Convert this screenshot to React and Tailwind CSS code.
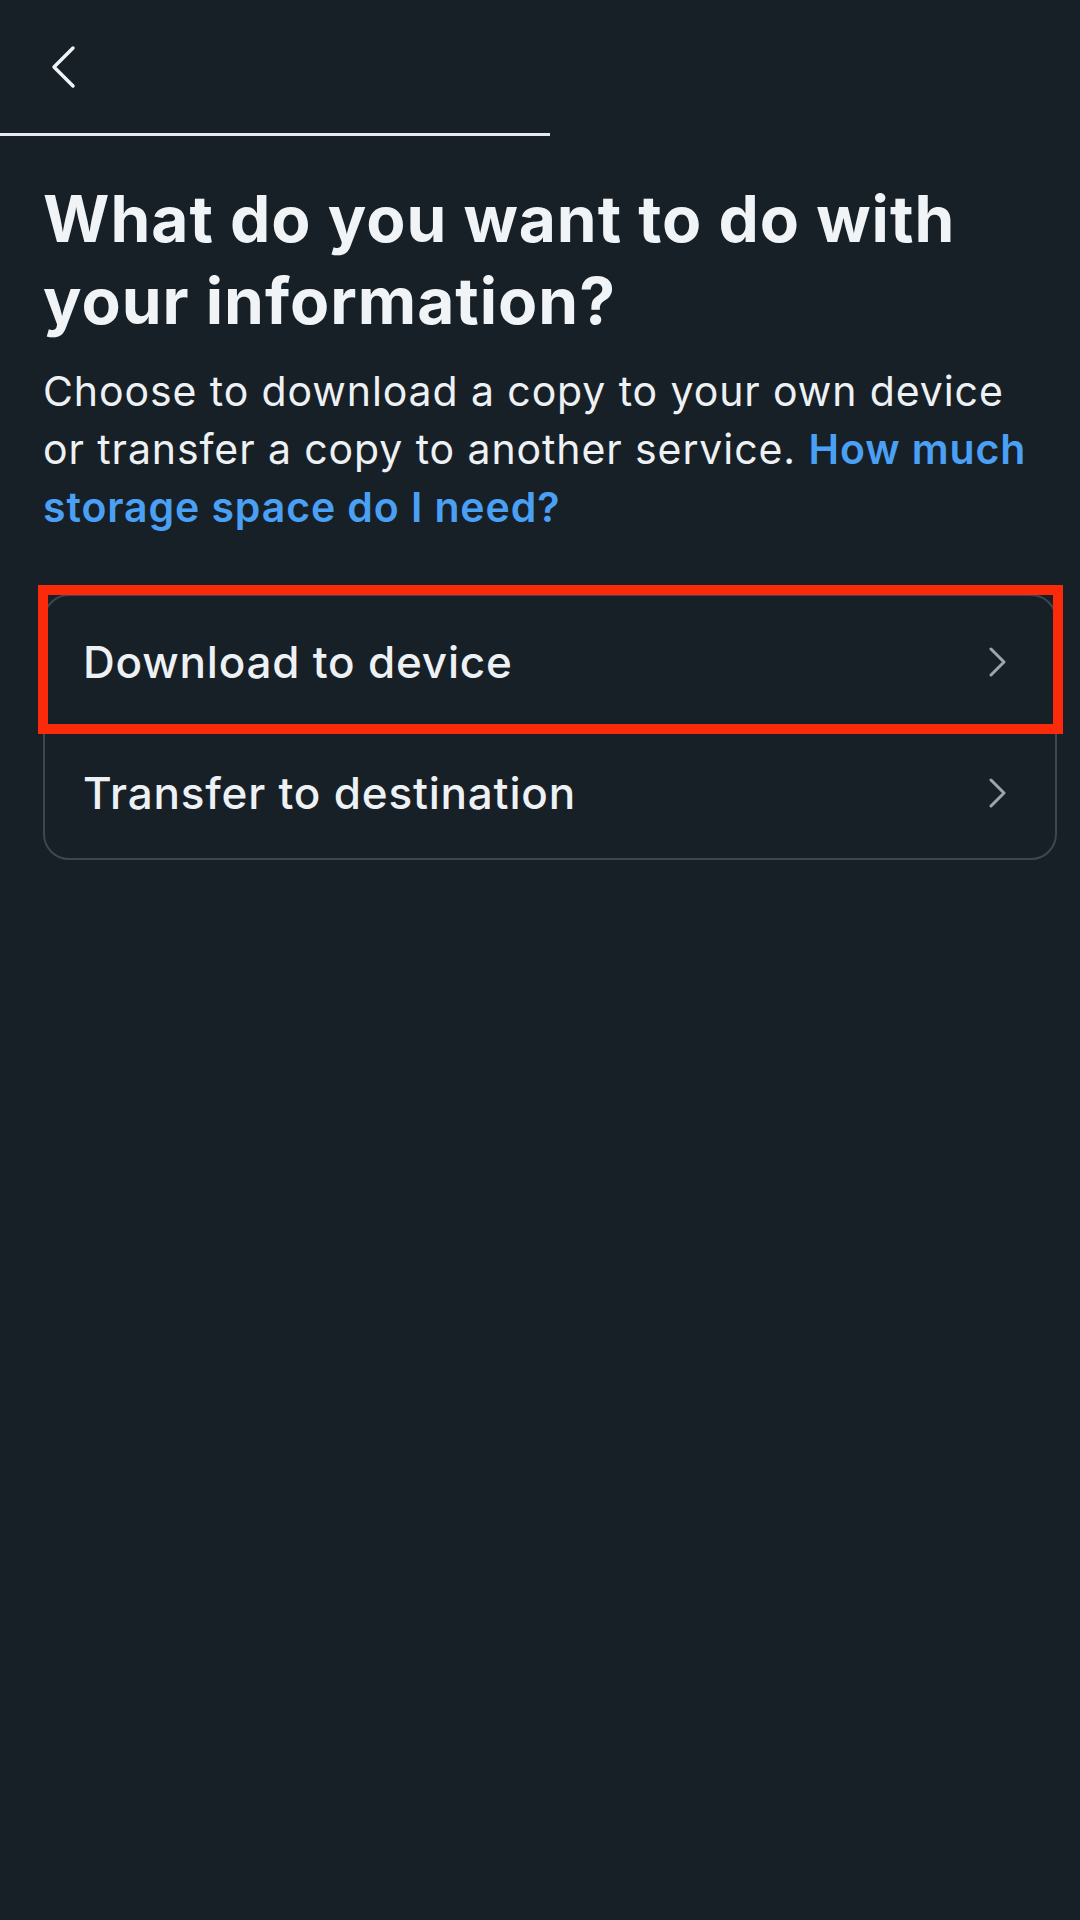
import { ChevronRight } from 'lucide-react';

const options = [
  { id: 'download', label: 'Download to device', highlighted: true },
  { id: 'transfer', label: 'Transfer to destination' },
];

const BackIcon = () => (
  <svg width="28" height="44" viewBox="0 0 28 44" fill="none">
    <path d="M24 3 L5 22 L24 41" stroke="#f1f4f7" strokeWidth="3.5" strokeLinecap="round" strokeLinejoin="round" />
  </svg>
);

const OptionRow = ({ option }) => (
  <div className="relative flex h-[131px] items-center justify-between pl-[38px] pr-[46px]">
    <span className="text-[44px] font-medium leading-none tracking-[0.8px] text-[#eef1f4]">{option.label}</span>
    <svg width="22" height="30" viewBox="0 0 22 30" fill="none">
      <path d="M4 2 L17 15 L4 28" stroke="#9aa5ae" strokeWidth="3" strokeLinecap="round" strokeLinejoin="round" />
    </svg>
    {option.highlighted && (
      <div className="pointer-events-none absolute left-[-7px] right-[-8px] top-[-11px] bottom-[-7px] border-[10px] border-[#fa2a0a]" />
    )}
  </div>
);

export default function App() {
  return (
    <div
      className="min-h-[1920px] w-[1080px] bg-[#182027] text-[#f1f4f7]"
      style={{ fontFamily: 'Inter, "Noto Sans", sans-serif' }}
    >
      <header className="flex h-[133px] items-start pl-[49px] pt-[45px]">
        <BackIcon />
      </header>
      <div className="h-[3px] w-[550px] bg-[#e6e9ed]" />

      <main className="pl-[43px] pr-[23px]">
        <h1 className="mt-[42px] pr-[20px] text-[64px] font-bold leading-[82px] tracking-[1px]">
          What do you want to do with your information?
        </h1>
        <p className="mt-[20px] text-[41px] leading-[58px] tracking-[0.9px] text-[#eef1f4]">
          Choose to download a copy to your own device or transfer a copy to another service.{' '}
          <span className="font-semibold text-[#4aa0f4]">How much storage space do I need?</span>
        </p>

        <div className="mt-[58px] rounded-[26px] border-2 border-[#3c4751]">
          {options.map((option) => (
            <OptionRow key={option.id} option={option} />
          ))}
        </div>
      </main>
    </div>
  );
}
